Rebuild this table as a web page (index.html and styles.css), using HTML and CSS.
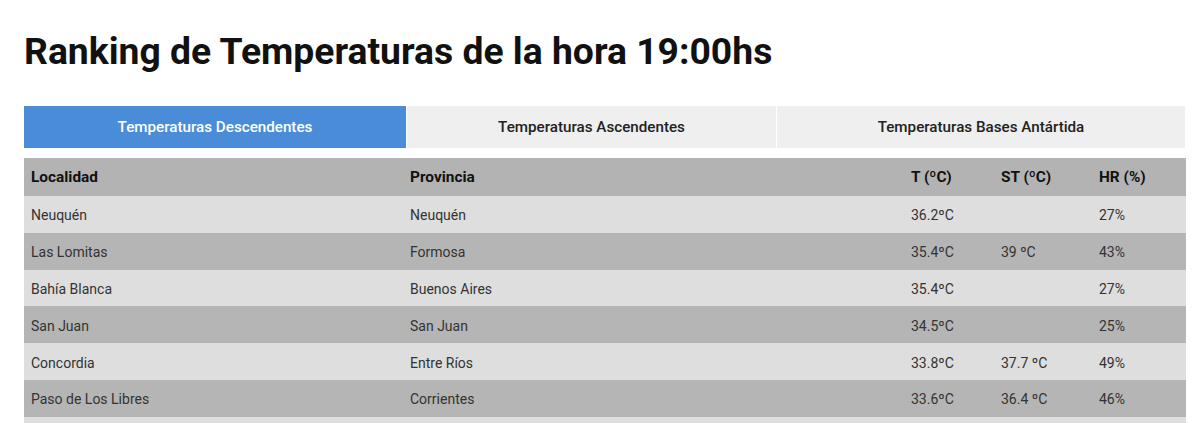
FILE: index.html
```html
<!DOCTYPE html>
<html lang="es">
<head>
<meta charset="utf-8">
<title>Ranking de Temperaturas</title>
<link rel="stylesheet" href="styles.css">
</head>
<body>
<main class="page">
  <h1 class="title">Ranking de Temperaturas de la hora 19:00hs</h1>
  <nav class="tabs">
    <div class="tab tab-active">Temperaturas Descendentes</div>
    <div class="tab tab-2">Temperaturas Ascendentes</div>
    <div class="tab tab-3">Temperaturas Bases Antártida</div>
  </nav>
  <div class="table">
    <div class="row head">
      <div>Localidad</div><div>Provincia</div><div>T (ºC)</div><div>ST (ºC)</div><div>HR (%)</div>
    </div>
    <div class="row light">
      <div>Neuquén</div><div>Neuquén</div><div>36.2ºC</div><div></div><div>27%</div>
    </div>
    <div class="row dark">
      <div>Las Lomitas</div><div>Formosa</div><div>35.4ºC</div><div>39 ºC</div><div>43%</div>
    </div>
    <div class="row light">
      <div>Bahía Blanca</div><div>Buenos Aires</div><div>35.4ºC</div><div></div><div>27%</div>
    </div>
    <div class="row dark">
      <div>San Juan</div><div>San Juan</div><div>34.5ºC</div><div></div><div>25%</div>
    </div>
    <div class="row light">
      <div>Concordia</div><div>Entre Ríos</div><div>33.8ºC</div><div>37.7 ºC</div><div>49%</div>
    </div>
    <div class="row dark">
      <div>Paso de Los Libres</div><div>Corrientes</div><div>33.6ºC</div><div>36.4 ºC</div><div>46%</div>
    </div>
    <div class="row light"></div>
  </div>
</main>
</body>
</html>
```
FILE: styles.css
```css
* { box-sizing: border-box; }
html, body { margin: 0; padding: 0; background: #fff; overflow: hidden; }
body { font-family: Roboto, "Liberation Sans", sans-serif; color: #333; }
.page { padding: 29px 14px 0 24px; }
.title {
  margin: 0 0 33px 0;
  font-size: 37.3px;
  font-weight: 700;
  color: #111;
  line-height: 44px;
}
.tabs {
  display: grid;
  grid-template-columns: 382px 369px 408px;
  column-gap: 1px;
  width: 1161px;
  height: 42px;
  margin-bottom: 10px;
}
.tab {
  display: flex;
  align-items: center;
  justify-content: center;
  font-size: 15.2px;
  font-weight: 500;
  background: #efefef;
  color: #222;
}
.tab-active { background: #4a8cd8; color: #fff; }
.table { width: 1162px; }
.row {
  display: grid;
  grid-template-columns: 379px 501px 90px 98px 94px;
  height: 36.8px;
  align-items: center;
  font-size: 14px;
  padding-top: 2px;
}
.row > div { padding-left: 7px; }
.head { height: 38px; font-size: 15.4px; font-weight: 700; background: #b3b3b3; color: #111; padding-top: 0; }
.light { background: #dedede; }
.dark { background: #b5b5b5; }
```
